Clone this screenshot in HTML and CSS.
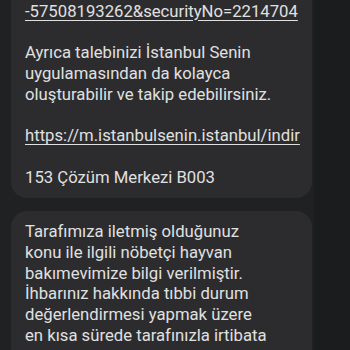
FILE: index.html
```html
<!DOCTYPE html>
<html lang="tr">
<head>
    <meta charset="UTF-8">
    <meta name="viewport" content="width=device-width, initial-scale=1.0">
    <title>Mesajlar</title>
    <link rel="stylesheet" href="styles.css">
</head>
<body>
    <div class="screen">
        <div class="thread">
            <div class="msg msg-first">
                <p><a href="#">-57508193262&amp;securityNo=2214704</a></p>
                <p>Ayrıca talebinizi İstanbul Senin uygulamasından da kolayca oluşturabilir ve takip edebilirsiniz.</p>
                <p><a href="#">https://m.istanbulsenin.istanbul/indir</a></p>
                <p>153 Çözüm Merkezi B003</p>
            </div>
            <div class="msg">
                <p>Tarafımıza iletmiş olduğunuz konu ile ilgili nöbetçi hayvan bakımevimize bilgi verilmiştir. İhbarınız hakkında tıbbi durum değerlendirmesi yapmak üzere en kısa sürede tarafınızla irtibata geçilecektir.</p>
            </div>
        </div>
        <div class="side"></div>
    </div>
</body>
</html>
```

FILE: styles.css
```css
html, body {
    margin: 0;
    padding: 0;
    height: 100%;
}
body {
    background: #202123;
    font-family: Roboto, "Noto Sans", sans-serif;
    overflow: hidden;
}
.screen {
    display: flex;
    height: 350px;
    overflow: hidden;
}
.thread {
    width: 301px;
    padding-left: 11px;
    display: flex;
    flex-direction: column;
    gap: 13px;
}
.side {
    flex: 1;
    margin-left: 2px;
    background: #1b1c1e;
}
.msg {
    background: #2c2c2e;
    border-radius: 16px;
    padding: 11px 40px 10px 14px;
    color: #e0e0e0;
    font-size: 16.7px;
    line-height: 20.7px;
}
.msg-first {
    border-radius: 0 0 16px 16px;
    padding-top: 2px;
}
.msg p {
    margin: 0 0 20.7px;
}
.msg p:last-child {
    margin-bottom: 0;
}
.msg a {
    color: #e0e0e0;
    white-space: nowrap;
    text-decoration: underline;
    text-underline-offset: 3px;
}
```
